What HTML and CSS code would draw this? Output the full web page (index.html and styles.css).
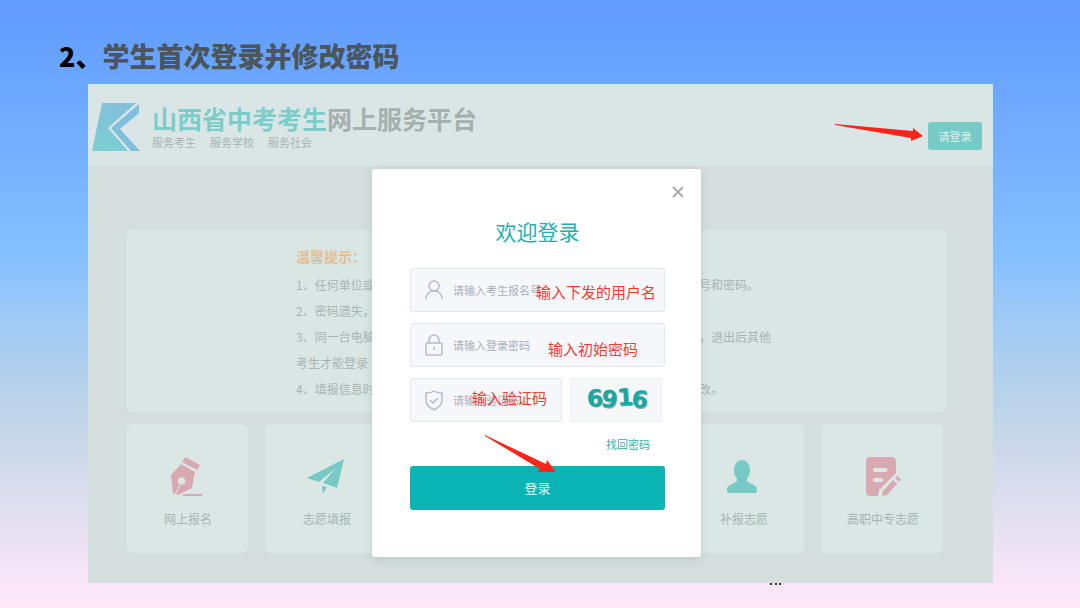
FILE: index.html
```html
<!DOCTYPE html>
<html lang="zh-CN">
<head>
<meta charset="utf-8">
<meta name="viewport" content="width=device-width, initial-scale=1">
<title>学生首次登录并修改密码</title>
<link rel="stylesheet" href="styles.css">
</head>
<body>
<main class="slide">
  <h1 class="slide-title"><span class="slide-number">2、</span>学生首次登录并修改密码</h1>

  <section class="app">
    <header class="app-header">
      <svg class="logo" viewBox="0 0 48 48" aria-hidden="true">
        <defs>
          <linearGradient id="logoFill" x1="0.6" y1="0" x2="0.2" y2="1">
            <stop offset="0" stop-color="#84bfdc"/>
            <stop offset="1" stop-color="#7ccfd0"/>
          </linearGradient>
        </defs>
        <path d="M10 0H44L16 25L36 48H0Z" fill="url(#logoFill)"/>
        <path d="M47 1V10L28 26L48 48H39L19 25Z" fill="#80bfdb"/>
      </svg>
      <div class="brand">
        <p class="brand-name"><span class="brand-accent">山西省中考考生</span>网上服务平台</p>
        <p class="brand-tags"><span>服务考生</span><span>服务学校</span><span>服务社会</span></p>
      </div>
      <button class="signin" type="button">请登录</button>
      <svg class="arrow arrow-signin" viewBox="0 0 90 20" aria-hidden="true">
        <path d="M1 1L79 8L79 5L89 13L77 18L77 15L1 2Z"/>
      </svg>
    </header>

    <section class="notice">
      <h2 class="notice-title">温馨提示：</h2>
      <div class="notice-row"><span>1、任何单位或</span><span>号和密码。</span></div>
      <div class="notice-row"><span>2、密码遗失，</span></div>
      <div class="notice-row"><span>3、同一台电脑</span><span>，退出后其他</span></div>
      <div class="notice-row"><span>考生才能登录</span></div>
      <div class="notice-row"><span>4、填报信息时</span><span>改。</span></div>
    </section>

    <nav class="cards">
      <a class="card" href="#">
        <svg class="card-icon pink" viewBox="0 0 40 40" aria-hidden="true">
          <path d="M17 0L32 8L29 13L14 5Z"/>
          <path d="M13 7L27 15L25 25L24 31L10 38L5 36L3 18Z"/>
          <circle class="cutout" cx="13.5" cy="24" r="3.8"/>
          <path class="cutout-line" d="M13 26L7 38"/>
          <path d="M15 37H34V39H15Z"/>
        </svg>
        <span>网上报名</span>
      </a>
      <a class="card" href="#">
        <svg class="card-icon teal" viewBox="0 0 40 40" aria-hidden="true">
          <path d="M37 2L0 21L12 25L29 11L16 26L30 31Z"/>
          <path d="M15 29L20 30L16 37Z"/>
        </svg>
        <span>志愿填报</span>
      </a>
      <a class="card card-after-gap" href="#">
        <svg class="card-icon teal" viewBox="0 0 40 40" aria-hidden="true">
          <path d="M18 3C23 3 26 8 26 13C26 18 24 20 23 22V24C25 27 33 27 33 33C33 35 33 36 31 36H5C3 36 3 35 3 33C3 27 11 27 13 24V22C12 20 10 18 10 13C10 8 13 3 18 3Z"/>
        </svg>
        <span>补报志愿</span>
      </a>
      <a class="card" href="#">
        <svg class="card-icon pink" viewBox="0 0 40 40" aria-hidden="true">
          <path fill-rule="evenodd" d="M7 0H28Q33 0 33 5V16L16 33L15 39H7Q3 39 3 35V4Q3 0 7 0ZM11 11Q9 13 11 15H23Q26 13 23 11ZM11 21Q9 23 11 25H19Q22 23 19 21Z"/>
          <path d="M30 23L34 27L24 38L19 39L20 34ZM32 21L34 19L38 22L36 25Z"/>
        </svg>
        <span>高职中专志愿</span>
      </a>
    </nav>

    <div class="overlay">
      <form class="modal" role="dialog" aria-labelledby="loginTitle">
        <button class="close" type="button" aria-label="关闭">
          <svg viewBox="0 0 12 12" aria-hidden="true"><path d="M1 1L11 11M11 1L1 11"/></svg>
        </button>
        <h2 class="modal-title" id="loginTitle">欢迎登录</h2>

        <label class="field">
          <svg class="field-icon" viewBox="0 0 20 22" aria-hidden="true"><circle cx="10" cy="7" r="5"/><path d="M2 20C2 9 18 9 18 20"/></svg>
          <input type="text" placeholder="请输入考生报名号" aria-label="考生报名号">
          <span class="note note-user">输入下发的用户名</span>
        </label>
        <label class="field">
          <svg class="field-icon" viewBox="0 0 20 22" aria-hidden="true"><rect x="2" y="9" width="16" height="12" rx="1"/><path d="M5 9V6A5 5 0 0 1 15 6V9M10 13V16"/></svg>
          <input type="password" placeholder="请输入登录密码" aria-label="登录密码">
          <span class="note note-password">输入初始密码</span>
        </label>
        <div class="captcha-row">
          <label class="field">
            <svg class="field-icon" viewBox="0 0 20 22" aria-hidden="true"><path d="M10 2C13 4 15 4 18 4V11C18 16 14 19 10 21C6 19 2 16 2 11V4C5 4 7 4 10 2Z"/><path d="M6 11L9 14L14 9"/></svg>
            <input type="text" placeholder="请输入验证码" aria-label="验证码">
            <span class="note note-captcha">输入验证码</span>
          </label>
          <button class="captcha" type="button" aria-label="6916">
            <svg viewBox="0 0 92 44" aria-hidden="true">
              <g class="captcha-shadow"><text x="17" y="29" transform="rotate(-4 24 20)">6</text><text x="32" y="30" transform="rotate(8 40 20)">9</text><text x="48" y="28" transform="rotate(-4 54 20)">1</text><text x="63" y="30" transform="rotate(6 69 20)">6</text></g>
              <g class="captcha-digits"><text x="16" y="28" transform="rotate(-4 24 20)">6</text><text x="31" y="29" transform="rotate(8 40 20)">9</text><text x="47" y="27" transform="rotate(-4 54 20)">1</text><text x="62" y="29" transform="rotate(6 69 20)">6</text></g>
            </svg>
          </button>
        </div>
        <a class="recover" href="#">找回密码</a>
        <div class="submit-wrap">
          <button class="submit" type="submit">登录</button>
          <svg class="arrow arrow-submit" viewBox="0 0 74 40" aria-hidden="true">
            <path d="M1 1L62 30L63 26L72 38L53 38L56 35L1 2Z"/>
          </svg>
        </div>
      </form>
    </div>
    <span class="marks" aria-hidden="true"></span>
  </section>
</main>
</body>
</html>
```
FILE: styles.css
```css
* { box-sizing: border-box; }

body {
  margin: 0;
  min-height: 100vh;
  font-family: "Noto Sans CJK SC", sans-serif;
  background: linear-gradient(#609bff 0%, #72adff 22%, #85c0ff 42%, #a0caf5 53%, #b8d3ea 65%, #c8d7e8 72%, #d8dcee 80%, #e8e2f2 88%, #f8e5f8 95%, #ffe8f6 100%);
}

h1, h2, p { margin: 0; }
button, input { font: inherit; }
button { cursor: pointer; border: 0; }
a { text-decoration: none; }

.slide { padding: 36px 87px 25px 88px; }

.slide-title {
  margin-left: -29px;
  padding-bottom: 8px;
  color: #4a565b;
  font-size: 27px;
  font-weight: 900;
  line-height: 40px;
}
.slide-number { color: #000; }

.app {
  position: relative;
  background: #d4dedc;
  color: #a8b4b3;
  font-size: 12px;
}

.app-header {
  position: relative;
  display: flex;
  align-items: flex-start;
  height: 82px;
  padding: 19px 11px 0 4px;
  background: #dae6e5;
}
.logo { width: 48px; height: 48px; margin-right: 12px; }
.brand { flex: 1; }
.brand-name {
  color: #a4afae;
  font-size: 25px;
  font-weight: 700;
  line-height: 30px;
}
.brand-accent { color: #7ccdc9; }
.brand-tags {
  display: flex;
  gap: 14px;
  font-size: 11px;
  line-height: 18px;
}
.signin {
  width: 54px;
  height: 28px;
  margin-top: 19px;
  padding: 0;
  border-radius: 3px;
  background: #77cbc7;
  color: #dcefed;
  font-size: 11px;
}

.arrow { position: absolute; fill: #fb2418; }
.arrow-signin { width: 90px; height: 20px; right: 69px; top: 39px; }
.arrow-submit { width: 74px; height: 40px; left: 74px; top: -32px; }

.notice {
  margin: 64px 46px 12px 38px;
  padding: 13px 170px 10px;
  border-radius: 6px;
  background: #d9e6e4;
}
.notice-title {
  margin-bottom: 3px;
  color: #e4bd91;
  font-size: 14px;
  font-weight: 700;
  line-height: 26px;
}
.notice-row {
  display: grid;
  grid-template-columns: 403px 1fr;
  line-height: 26px;
  white-space: nowrap;
}

.cards {
  display: grid;
  grid-template-columns: repeat(6, 1fr);
  gap: 17px;
  padding: 0 50px 30px 38px;
}
.card {
  display: flex;
  flex-direction: column;
  align-items: center;
  gap: 12px;
  padding: 33px 0 24px 2px;
  border-radius: 6px;
  background: #dae7e5;
  color: #a8b4b3;
  line-height: 20px;
}
.card-after-gap { grid-column-start: 5; }
.card-icon { width: 40px; height: 40px; }
.pink { fill: #d9a9b2; }
.teal { fill: #77c9c5; }
.cutout { fill: #dae7e5; }
.cutout-line { stroke: #dae7e5; stroke-width: 1; }

.overlay {
  position: absolute;
  inset: 0;
  display: flex;
  justify-content: center;
  align-items: flex-start;
  padding: 85px 8px 0 0;
}
.modal {
  position: relative;
  display: flex;
  flex-direction: column;
  gap: 11px;
  width: 329px;
  padding: 46px 36px 47px 38px;
  border-radius: 3px;
  background: #fff;
  box-shadow: 0 2px 10px rgba(90, 120, 115, 0.2);
}
.close {
  position: absolute;
  top: 16px;
  right: 16px;
  width: 14px;
  height: 14px;
  padding: 1px;
  background: none;
}
.close svg { display: block; fill: none; stroke: #aaa; stroke-width: 2; }
.modal-title {
  margin-bottom: 10px;
  color: #24afae;
  font-size: 21px;
  font-weight: 400;
  line-height: 32px;
  text-align: center;
}
.field {
  position: relative;
  display: flex;
  flex: 1 0 44px;
  align-items: center;
  gap: 9px;
  min-width: 0;
  height: 44px;
  padding: 0 8px 0 13px;
  border: 1px solid #e2e7ec;
  border-radius: 3px;
  background: #f5f7fb;
}
.field-icon {
  flex: none;
  width: 20px;
  height: 22px;
  fill: none;
  stroke: #b4bacf;
  stroke-width: 1.5;
}
.field input {
  width: 100%;
  min-width: 0;
  padding: 0;
  border: 0;
  outline: 0;
  background: none;
  font-size: 11px;
}
.field input::placeholder { color: #a9b0ba; opacity: 1; }

.note {
  position: absolute;
  color: #f03c30;
  font-size: 15px;
  line-height: 20px;
  white-space: nowrap;
}
.note-user { right: 8px; top: 13px; }
.note-password { right: 26px; top: 15px; }
.note-captcha { right: 14px; top: 9px; }

.captcha-row { display: flex; gap: 8px; padding-right: 3px; }
.captcha {
  width: 92px;
  height: 44px;
  padding: 0;
  border: 1px solid #e9edf1;
  border-radius: 3px;
  background: #f5f7fb;
}
.captcha svg { display: block; width: 100%; }
.captcha text {
  font-family: "DejaVu Sans", sans-serif;
  font-size: 24px;
  font-weight: 700;
}
.captcha-shadow { fill: #9aa5a5; }
.captcha-digits { fill: #16aaa5; }

.recover {
  align-self: flex-end;
  margin-right: 15px;
  color: #35b0a8;
  font-size: 11px;
  line-height: 22px;
}
.submit-wrap { position: relative; }
.submit {
  display: block;
  width: 100%;
  height: 44px;
  padding: 0 0 2px;
  border-radius: 3px;
  background: #0bb4b4;
  color: #e8fafa;
  font-size: 13px;
}

.marks {
  position: absolute;
  left: 682px;
  top: 100%;
  width: 11px;
  border-top: 2px dotted #333;
}
```
